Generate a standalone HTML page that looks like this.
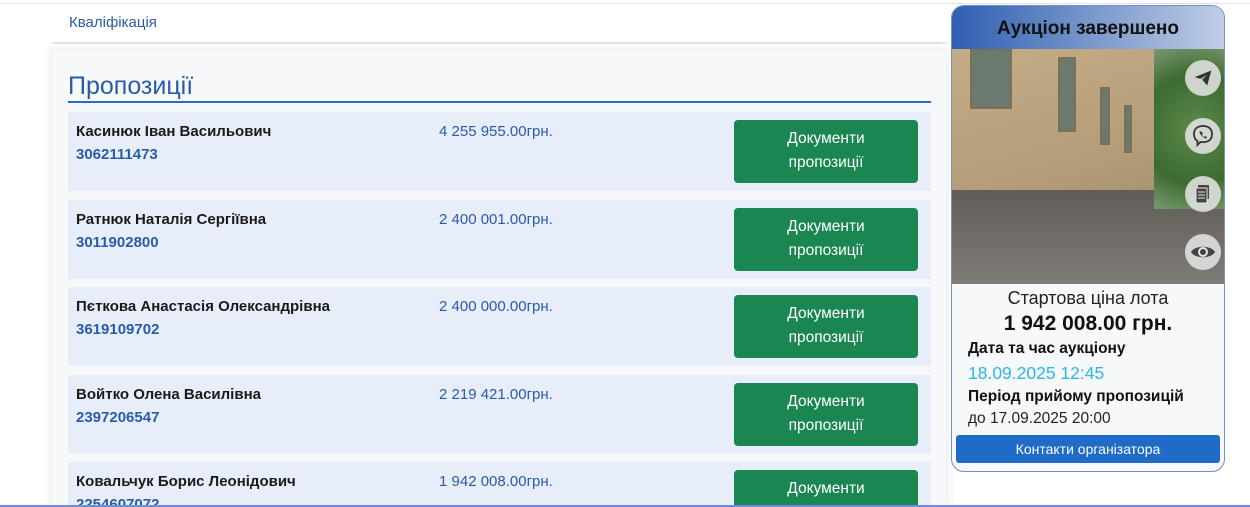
<!DOCTYPE html>
<html><head><meta charset="utf-8"><style>
*{box-sizing:border-box;margin:0;padding:0}
html,body{width:1250px;height:507px;overflow:hidden}
body{background:#fff;font-family:"Liberation Sans","DejaVu Sans",sans-serif;position:relative}
.topline{position:absolute;left:0;right:0;top:3px;height:1px;background:#e3e3e3}
.botline{position:absolute;left:0;right:0;top:505px;height:2px;background:#6f8fd0}
.qual{position:absolute;left:69px;top:14px;font-size:15px;color:#2a5ba8}
.qline{position:absolute;left:52px;width:894px;top:42px;height:2px;background:#e2e4e8}
.card{position:absolute;left:52px;top:50px;width:894px;height:457px;background:#f7f8fa;box-shadow:0 0 10px rgba(0,0,0,.12)}
.title{position:absolute;left:68px;top:72px;font-size:25px;color:#2a5ba8}
.tline{position:absolute;left:68px;top:101px;width:863px;height:2px;background:#2a6ad0}
.row{position:absolute;left:68px;width:863px;height:79px;background:#e7eefa;overflow:hidden}
.name{position:absolute;left:8px;top:11px;font-size:15px;font-weight:bold;color:#1a1a1a}
.code{position:absolute;left:8px;top:34px;font-size:15px;font-weight:bold;color:#2a5ba8}
.price{position:absolute;left:371px;top:11px;font-size:15px;color:#2a5ba8}
.btn{position:absolute;left:666px;top:8px;width:184px;height:63px;background:#1a8753;border-radius:4px;color:#fff;font-size:15.5px;text-align:center;line-height:24px;padding-top:7px}
.side{position:absolute;left:951px;top:5px;width:274px;height:467px;border:1.5px solid #6f8fd0;border-radius:13px;overflow:hidden;background:#f7f8fa}
.hdr{height:43px;background:linear-gradient(90deg,#2e5fb0,#c0cde6);text-align:center;font-weight:bold;font-size:19px;line-height:46px;color:#111}
.img{position:relative;height:235px;background:
linear-gradient(180deg,rgba(0,0,0,0) 0,rgba(0,0,0,0) 60%,#605c58 60%,#807c78 100%),
linear-gradient(165deg,#c3ac86 0,#b49c78 50%,#8a7c6c 100%);overflow:hidden}
.win{position:absolute;background:#6b7a6e;border:2px solid #7d6e58}
.tree{position:absolute;right:0;top:0;width:70px;height:160px;background:radial-gradient(circle at 60% 50%,#5e8a4a,#3c6a30 60%,#7a9a70)}
.ic{position:absolute;left:233px;width:36px;height:36px;border-radius:50%;background:rgba(230,230,230,.85);display:flex;align-items:center;justify-content:center}
.info{padding:2px 16px 0}
.c{text-align:center}
.btn2{margin:5px 4px 0;height:28px;background:#1f6bc8;border-radius:3px;color:#fff;text-align:center;font-size:14px;line-height:28px}
</style></head><body>
<div class="topline"></div>
<div class="qual">Кваліфікація</div>
<div class="qline"></div>
<div class="card"></div>
<div class="title">Пропозиції</div>
<div class="tline"></div>

<div class="row" style="top:112px"><div class="name">Касинюк Іван Васильович</div><div class="code">3062111473</div><div class="price">4 255 955.00грн.</div><div class="btn">Документи<br>пропозиції</div></div>
<div class="row" style="top:200px"><div class="name">Ратнюк Наталія Сергіївна</div><div class="code">3011902800</div><div class="price">2 400 001.00грн.</div><div class="btn">Документи<br>пропозиції</div></div>
<div class="row" style="top:287px"><div class="name">Пєткова Анастасія Олександрівна</div><div class="code">3619109702</div><div class="price">2 400 000.00грн.</div><div class="btn">Документи<br>пропозиції</div></div>
<div class="row" style="top:375px"><div class="name">Войтко Олена Василівна</div><div class="code">2397206547</div><div class="price">2 219 421.00грн.</div><div class="btn">Документи<br>пропозиції</div></div>
<div class="row" style="top:462px;height:43px"><div class="name">Ковальчук Борис Леонідович</div><div class="code">2254607072</div><div class="price">1 942 008.00грн.</div><div class="btn">Документи<br>пропозиції</div></div>

<div class="side">
<div class="hdr">Аукціон завершено</div>
<div class="img">
<div class="tree"></div>
<div class="win" style="left:18px;top:0;width:42px;height:60px"></div>
<div class="win" style="left:106px;top:8px;width:18px;height:75px"></div>
<div class="win" style="left:148px;top:38px;width:10px;height:58px"></div>
<div class="win" style="left:172px;top:56px;width:8px;height:48px"></div>
<div class="ic" style="top:11px"><svg width="20" height="20" viewBox="0 0 24 24"><path d="M2 11L22 3 17 21 11 14 17 8 9 13Z" fill="#333"/></svg></div>
<div class="ic" style="top:69px"><svg width="24" height="24" viewBox="0 0 24 24" fill="none" stroke="#333" stroke-width="1.8"><path d="M12 2C6 2 3 5 3 10c0 4 1.5 6 3.5 7v4l3-3c1 .1 2 .1 2.5.1 6 0 9-3 9-8S18 2 12 2z"/><path d="M9 7c-1 1 0 3 2 5s4 3 5 2l-1-2-2 1-2-2 1-2z" fill="#333" stroke="none"/></svg></div>
<div class="ic" style="top:127px"><svg width="18" height="20" viewBox="0 0 18 20"><rect x="4" y="1" width="11" height="14" fill="#444"/><rect x="2" y="4" width="11" height="15" fill="#444" stroke="#e6e6e6"/><path d="M4 8h7M4 11h7M4 14h7" stroke="#e6e6e6"/></svg></div>
<div class="ic" style="top:185px"><svg width="26" height="18" viewBox="0 0 26 18"><path d="M1 9C5 2 21 2 25 9C21 16 5 16 1 9Z" fill="#444"/><circle cx="13" cy="9" r="5" fill="#e6e6e6"/><circle cx="13" cy="9" r="3" fill="#444"/></svg></div>
</div>
<div class="info">
<div class="c" style="font-size:18px;color:#222;line-height:24px">Стартова ціна лота</div>
<div class="c" style="font-size:21px;font-weight:bold;color:#111;line-height:28px">1 942 008.00 грн.</div>
<div style="font-size:15.5px;font-weight:bold;color:#111;line-height:22px">Дата та час аукціону</div>
<div style="font-size:17.5px;color:#2cb7e8;line-height:26px">18.09.2025 12:45</div>
<div style="font-size:15.5px;font-weight:bold;color:#111;line-height:22px">Період прийому пропозицій</div>
<div style="font-size:15.5px;color:#222;line-height:22px">до 17.09.2025 20:00</div>
</div>
<div class="btn2">Контакти організатора</div>
</div>
<div class="botline"></div>
</body></html>
